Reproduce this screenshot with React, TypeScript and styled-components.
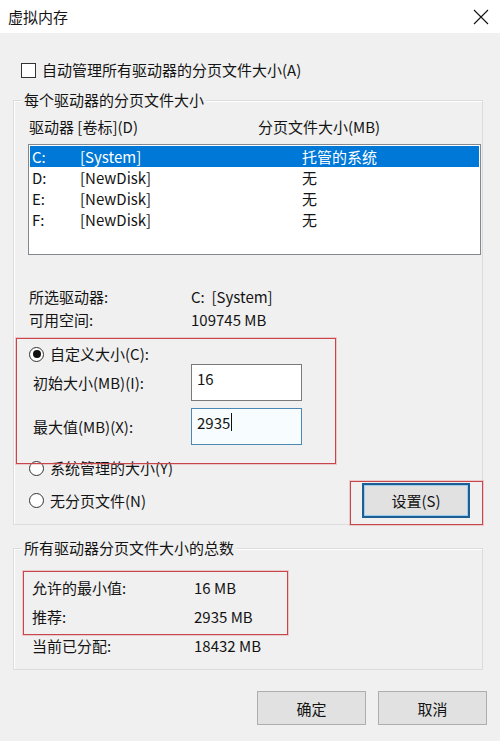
import styled, { createGlobalStyle } from "styled-components";

const GlobalStyle = createGlobalStyle`
  html, body {
    margin: 0;
    padding: 0;
    background: #f0f0f0;
  }
  body {
    font-family: "Noto Sans CJK SC", "Noto Sans", sans-serif;
    font-size: 15px;
    color: #141414;
  }
  * { box-sizing: border-box; }
`;

const Window = styled.div`
  width: 500px;
  height: 741px;
  background: #f0f0f0;
  overflow: hidden;
`;

const TitleBar = styled.div`
  height: 33px;
  background: #fff;
  display: flex;
  align-items: center;
  justify-content: space-between;
  padding: 0 11px 0 8px;
  line-height: 20px;
`;

const Content = styled.div`
  padding: 0 17px 0 13px;
`;

const CheckRow = styled.label`
  display: flex;
  align-items: center;
  height: 22px;
  margin: 26px 0 0 8px;
  gap: 6px;
  line-height: 20px;
`;

const CheckBox = styled.span`
  flex: none;
  display: block;
  width: 15px;
  height: 15px;
  border: 1px solid #333;
  background: #fff;
`;

const GroupBox = styled.div<{ $top: number; $pad: string }>`
  margin-top: ${(p) => p.$top}px;
  border: 1px solid #dcdcdc;
  box-shadow: inset 1px 1px 0 #fff;
  padding: ${(p) => p.$pad};
`;

const Caption = styled.div<{ $left: number }>`
  width: fit-content;
  margin: -11px 0 0 ${(p) => p.$left}px;
  padding: 0 2px;
  line-height: 20px;
  background: #f0f0f0;
`;

const Columns = styled.div<{ $cols: string; $h: number; $indent?: number }>`
  display: grid;
  grid-template-columns: ${(p) => p.$cols};
  line-height: ${(p) => p.$h}px;
  padding-left: ${(p) => p.$indent ?? 0}px;
  white-space: nowrap;
`;

const Header = styled(Columns)`
  margin: 7px 0 7px;
`;

const ListBox = styled.div`
  height: 111px;
  background: #fff;
  border: 1px solid #828790;
  padding: 1px;
`;

const ListRow = styled(Columns)<{ $selected?: boolean }>`
  padding-left: 2px;
  background: ${(p) => (p.$selected ? "#0078d7" : "transparent")};
  color: ${(p) => (p.$selected ? "#fff" : "#141414")};
`;

const InfoBlock = styled.div<{ $top: number }>`
  margin-top: ${(p) => p.$top}px;
`;

const Marked = styled.div<{ $l: number; $t: number; $w: number; $h: number }>`
  position: relative;
  &::after {
    content: "";
    position: absolute;
    left: ${(p) => p.$l}px;
    top: ${(p) => p.$t}px;
    width: ${(p) => p.$w}px;
    height: ${(p) => p.$h}px;
    border: 1px solid #c9454c;
    box-shadow: 0 0 0 1px rgba(226, 130, 134, 0.35);
    pointer-events: none;
  }
`;

const RadioRow = styled.div<{ $top?: number }>`
  display: flex;
  align-items: center;
  gap: 6px;
  height: 20px;
  line-height: 20px;
  margin: ${(p) => p.$top ?? 0}px 0 0 1px;
  white-space: nowrap;
`;

const Radio = styled.span<{ $checked?: boolean }>`
  flex: none;
  width: 15px;
  height: 15px;
  border-radius: 50%;
  border: 1px solid #333;
  background: #fff;
  display: flex;
  align-items: center;
  justify-content: center;
  &::before {
    content: "";
    width: 8px;
    height: 8px;
    border-radius: 50%;
    background: ${(p) => (p.$checked ? "#111" : "transparent")};
  }
`;

const FieldRow = styled.div<{ $top?: number }>`
  display: grid;
  grid-template-columns: 158px 111px;
  align-items: center;
  padding-left: 5px;
  margin-top: ${(p) => p.$top ?? 0}px;
  white-space: nowrap;
`;

const Field = styled.div<{ $focused?: boolean }>`
  height: 37px;
  border: 1px solid ${(p) => (p.$focused ? "#4b88b3" : "#7a7a7a")};
  background: ${(p) => (p.$focused ? "#f7fdff" : "#fff")};
  padding: 4px 0 0 5px;
  line-height: 20px;
  display: flex;
  align-items: flex-start;
`;

const Caret = styled.span`
  width: 1px;
  height: 18px;
  margin-left: 1px;
  background: #111;
`;

const ActionRow = styled.div`
  display: flex;
  align-items: center;
  justify-content: space-between;
  margin-top: 5px;
  height: 35px;
`;

const Button = styled.button<{ $w: number; $h: number; $default?: boolean }>`
  width: ${(p) => p.$w}px;
  height: ${(p) => p.$h}px;
  font: inherit;
  color: #141414;
  background: #e1e1e1;
  border: ${(p) => (p.$default ? "2px solid #1d5f94" : "1px solid #adadad")};
  box-shadow: ${(p) => (p.$default ? "inset 0 0 0 1px #9ccbed" : "none")};
  padding: 0;
  cursor: pointer;
`;

const SetWrap = styled(Marked)`
  margin-right: 11px;
`;

const Footer = styled.div`
  display: flex;
  justify-content: flex-end;
  gap: 12px;
  margin-top: 21px;
  padding-right: 13px;
`;

const drives = [
  { letter: "C:", label: "[System]", size: "托管的系统", selected: true },
  { letter: "D:", label: "[NewDisk]", size: "无" },
  { letter: "E:", label: "[NewDisk]", size: "无" },
  { letter: "F:", label: "[NewDisk]", size: "无" },
];

export default function App() {
  return (
    <Window>
      <GlobalStyle />
      <TitleBar>
        <span>虚拟内存</span>
        <svg width="16" height="16" viewBox="0 0 16 16">
          <path d="M1 1 L15 15 M15 1 L1 15" stroke="#111" strokeWidth="1.1" />
        </svg>
      </TitleBar>

      <Content>
        <CheckRow>
          <CheckBox />
          自动管理所有驱动器的分页文件大小(A)
        </CheckRow>

        <GroupBox $top={19} $pad="0 1px 6px 14px">
          <Caption $left={-6}>每个驱动器的分页文件大小</Caption>
          <Header $cols="229px 1fr" $h={20} $indent={1}>
            <span>驱动器 [卷标](D)</span>
            <span>分页文件大小(MB)</span>
          </Header>
          <ListBox>
            {drives.map((d) => (
              <ListRow key={d.letter} $cols="48px 222px 1fr" $h={21} $selected={d.selected}>
                <span>{d.letter}</span>
                <span>{d.label}</span>
                <span>{d.size}</span>
              </ListRow>
            ))}
          </ListBox>

          <InfoBlock $top={30}>
            <Columns $cols="162px 1fr" $h={23} $indent={1}>
              <span>所选驱动器:</span>
              <span>C:&nbsp;&nbsp;[System]</span>
            </Columns>
            <Columns $cols="162px 1fr" $h={23} $indent={1}>
              <span>可用空间:</span>
              <span>109745 MB</span>
            </Columns>
          </InfoBlock>

          <InfoBlock $top={13}>
            <Marked $l={-12} $t={-6} $w={318} $h={124}>
              <RadioRow>
                <Radio $checked />
                自定义大小(C):
              </RadioRow>
              <FieldRow>
                <span>初始大小(MB)(I):</span>
                <Field>16</Field>
              </FieldRow>
              <FieldRow $top={7}>
                <span>最大值(MB)(X):</span>
                <Field $focused>
                  2935
                  <Caret />
                </Field>
              </FieldRow>
            </Marked>
          </InfoBlock>

          <RadioRow $top={13}>
            <Radio />
            系统管理的大小(Y)
          </RadioRow>
          <ActionRow>
            <RadioRow>
              <Radio />
              无分页文件(N)
            </RadioRow>
            <SetWrap $l={-12} $t={-2} $w={131} $h={42}>
              <Button $w={108} $h={35} $default>
                设置(S)
              </Button>
            </SetWrap>
          </ActionRow>
        </GroupBox>

        <GroupBox $top={23} $pad="0 1px 9px 18px">
          <Caption $left={-10}>所有驱动器分页文件大小的总数</Caption>
          <InfoBlock $top={15}>
            <Marked $l={-9} $t={-2} $w={263} $h={62}>
              <Columns $cols="162px 1fr" $h={29}>
                <span>允许的最小值:</span>
                <span>16 MB</span>
              </Columns>
              <Columns $cols="162px 1fr" $h={29}>
                <span>推荐:</span>
                <span>2935 MB</span>
              </Columns>
            </Marked>
            <Columns $cols="162px 1fr" $h={29}>
              <span>当前已分配:</span>
              <span>18432 MB</span>
            </Columns>
          </InfoBlock>
        </GroupBox>
      </Content>

      <Footer>
        <Button $w={109} $h={34}>确定</Button>
        <Button $w={109} $h={34}>取消</Button>
      </Footer>
    </Window>
  );
}
